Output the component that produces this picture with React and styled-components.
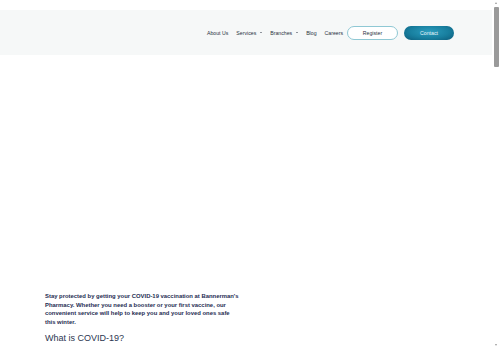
import React from 'react'
import styled, { createGlobalStyle } from 'styled-components'

const GlobalStyle = createGlobalStyle`
  html, body {
    margin: 0;
    padding: 0;
    background: #ffffff;
    font-family: "Liberation Sans", Arial, sans-serif;
    overflow: hidden;
  }
`

const Window = styled.div`
  display: flex;
  height: 348px;
`

const Content = styled.div`
  flex: 1;
  min-width: 0;
  overflow: hidden;
`

const Rail = styled.div`
  width: 8px;
  display: flex;
  flex-direction: column;
  align-items: center;
  background: #ffffff;
`

const Arrow = styled.span`
  width: 0;
  height: 0;
  margin: 2px 0;
  border-left: 1.5px solid transparent;
  border-right: 1.5px solid transparent;
  ${p => p.$down
    ? 'border-top: 2px solid #9a9a9a; margin-top: auto;'
    : 'border-bottom: 2px solid #9a9a9a;'}
`

const Thumb = styled.div`
  width: 5px;
  height: 60px;
  margin-top: 1px;
  background: #9a9a9a;
  border-radius: 1px;
`

const Page = styled.div`
  padding-top: 10px;
`

const Header = styled.header`
  height: 45px;
  background: #f6f8f8;
  display: flex;
  align-items: center;
  justify-content: flex-end;
  padding-right: 38px;
`

const Nav = styled.nav`
  display: flex;
  align-items: center;
`

const NavLink = styled.a`
  font-size: 5.2px;
  color: #2a3342;
  margin-right: 8px;
  text-decoration: none;
  display: flex;
  align-items: center;
  white-space: nowrap;
`

const Caret = styled.span`
  width: 0;
  height: 0;
  margin-left: 4px;
  border-left: 1.2px solid transparent;
  border-right: 1.2px solid transparent;
  border-top: 1.6px solid #2a3342;
`

const Button = styled.a`
  width: ${p => p.$primary ? '50px' : '51px'};
  height: 14px;
  border-radius: 8px;
  box-sizing: border-box;
  display: flex;
  align-items: center;
  justify-content: center;
  font-size: 5.2px;
  text-decoration: none;
  margin-left: ${p => p.$primary ? '6px' : '-4px'};
  color: ${p => p.$primary ? '#e8f6fa' : '#2a3342'};
  border: ${p => p.$primary ? 'none' : '1px solid #8fc8d4'};
  background: ${p => p.$primary
    ? 'radial-gradient(ellipse at 50% 40%, #2b9cbd 0%, #187f9f 55%, #0c5c7b 100%)'
    : '#ffffff'};
`

const Hero = styled.section`
  height: 237px;
`

const Intro = styled.div`
  padding-left: 45px;
  width: 196px;
`

const Lead = styled.p`
  margin: 0;
  font-size: 5.9px;
  font-weight: 700;
  line-height: 8.7px;
  color: #1e2c52;
`

const Heading = styled.h2`
  margin: 6px 0 0;
  font-size: 9px;
  font-weight: 400;
  color: #2b3550;
`

export default function App() {
  return (
    <Window>
      <GlobalStyle />
      <Content>
        <Page>
          <Header>
            <Nav>
              <NavLink>About Us</NavLink>
              <NavLink>Services<Caret /></NavLink>
              <NavLink>Branches<Caret /></NavLink>
              <NavLink>Blog</NavLink>
              <NavLink>Careers</NavLink>
              <Button>Register</Button>
              <Button $primary>Contact</Button>
            </Nav>
          </Header>
          <Hero />
          <Intro>
            <Lead>
              Stay protected by getting your COVID-19 vaccination at Bannerman's Pharmacy. Whether you need a booster or your first vaccine, our convenient service will help to keep you and your loved ones safe this winter.
            </Lead>
            <Heading>What is COVID-19?</Heading>
          </Intro>
        </Page>
      </Content>
      <Rail>
        <Arrow />
        <Thumb />
        <Arrow $down />
      </Rail>
    </Window>
  )
}
